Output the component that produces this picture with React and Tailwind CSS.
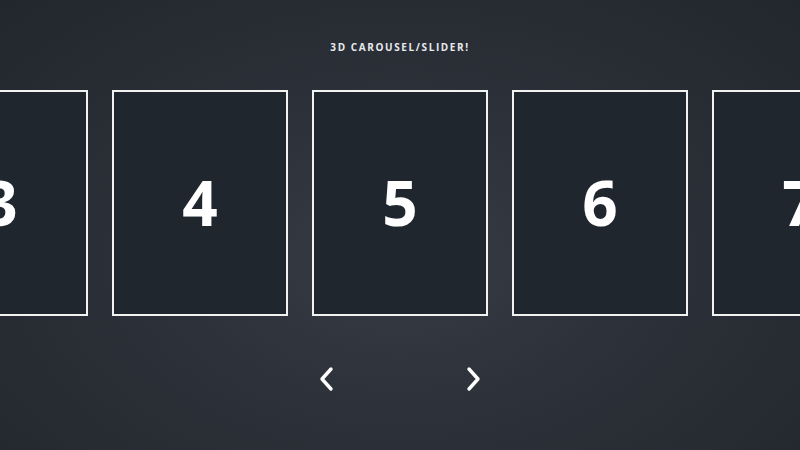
import { useState } from 'react';

const slides = [3, 4, 5, 6, 7];

const Chevron = ({ dir }) => (
  <svg width="18" height="26" viewBox="0 0 18 26" fill="none" stroke="white" strokeWidth="3.4" strokeLinecap="round" strokeLinejoin="round">
    {dir === 'left' ? <path d="M13 3 L4 13 L13 23" /> : <path d="M5 3 L14 13 L5 23" />}
  </svg>
);

export default function App() {
  const [active, setActive] = useState(5);

  return (
    <div
      className="w-[800px] h-[450px] overflow-hidden flex flex-col items-center bg-[radial-gradient(ellipse_at_50%_58%,#373c44_0%,#2c3139_45%,#22272e_100%)]"
      style={{ fontFamily: '"Open Sans", "Noto Sans", sans-serif' }}
    >
      <h1 className="mt-[40px] text-[10px] leading-[14px] font-bold tracking-[0.16em] text-[#e8eaee]">
        3D CAROUSEL/SLIDER!
      </h1>

      <div className="mt-[36px] w-full flex justify-center gap-[24px]">
        {slides.map((n) => (
          <div
            key={n}
            className="shrink-0 w-[176px] h-[226px] border-2 border-[#f2f2f2] bg-[#1f262d] flex items-center justify-center"
          >
            <span className="text-[62px] leading-none font-bold text-white -mt-[2px]">{n}</span>
          </div>
        ))}
      </div>

      <div className="mt-[50px] flex items-center gap-[128px]">
        <button onClick={() => setActive(active - 1)} className="w-[18px] h-[26px] flex items-center justify-center">
          <Chevron dir="left" />
        </button>
        <button onClick={() => setActive(active + 1)} className="w-[18px] h-[26px] flex items-center justify-center">
          <Chevron dir="right" />
        </button>
      </div>
    </div>
  );
}
